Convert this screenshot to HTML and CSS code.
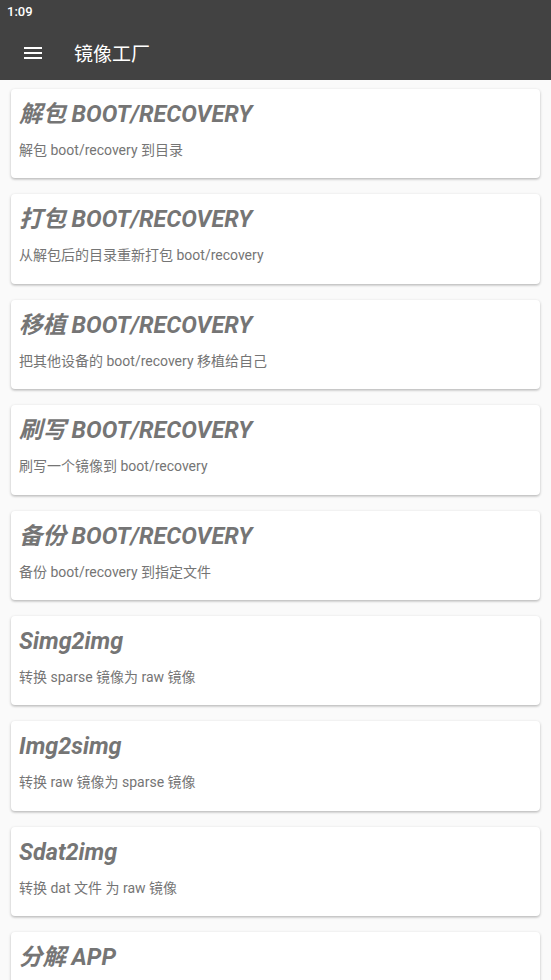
FILE: index.html
```html
<!DOCTYPE html>
<html lang="zh-CN">
<head>
    <meta charset="UTF-8">
    <meta name="viewport" content="width=device-width, initial-scale=1.0">
    <title>镜像工厂</title>
    <link rel="stylesheet" href="styles.css">
</head>
<body>

<header class="appbar">
    <div class="status">1:09</div>
    <div class="toolbar">
        <svg class="menu-icon" width="18" height="12" viewBox="0 0 18 12">
            <rect x="0" y="0" width="18" height="2" fill="#fff"/>
            <rect x="0" y="5" width="18" height="2" fill="#fff"/>
            <rect x="0" y="10" width="18" height="2" fill="#fff"/>
        </svg>
        <h1>镜像工厂</h1>
    </div>
</header>

<main class="list">
    <div class="card">
        <h2>解包 BOOT/RECOVERY</h2>
        <p>解包 boot/recovery 到目录</p>
    </div>
    <div class="card">
        <h2>打包 BOOT/RECOVERY</h2>
        <p>从解包后的目录重新打包 boot/recovery</p>
    </div>
    <div class="card">
        <h2>移植 BOOT/RECOVERY</h2>
        <p>把其他设备的 boot/recovery 移植给自己</p>
    </div>
    <div class="card">
        <h2>刷写 BOOT/RECOVERY</h2>
        <p>刷写一个镜像到 boot/recovery</p>
    </div>
    <div class="card">
        <h2>备份 BOOT/RECOVERY</h2>
        <p>备份 boot/recovery 到指定文件</p>
    </div>
    <div class="card">
        <h2>Simg2img</h2>
        <p>转换 sparse 镜像为 raw 镜像</p>
    </div>
    <div class="card">
        <h2>Img2simg</h2>
        <p>转换 raw 镜像为 sparse 镜像</p>
    </div>
    <div class="card">
        <h2>Sdat2img</h2>
        <p>转换 dat 文件 为 raw 镜像</p>
    </div>
    <div class="card">
        <h2>分解 APP</h2>
    </div>
</main>

</body>
</html>
```

FILE: styles.css
```css
body {
    margin: 0;
    padding: 0;
    background-color: #fafafa;
    font-family: Roboto, "Noto Sans CJK SC", sans-serif;
    height: 980px;
    overflow: hidden;
}
.appbar {
    background-color: #424242;
    color: #fff;
}
.status {
    height: 24px;
    line-height: 24px;
    padding-left: 7px;
    font-size: 13px;
    font-weight: 500;
}
.toolbar {
    height: 56px;
    display: flex;
    align-items: center;
}
.menu-icon {
    margin-left: 24px;
    margin-top: 1px;
}
.toolbar h1 {
    margin: 0 0 0 32px;
    font-size: 19px;
    font-weight: 400;
}
.list {
    padding: 9px 11px 0 11px;
}
.card {
    background-color: #fff;
    border-radius: 4px;
    box-shadow: 0 1px 3px rgba(0, 0, 0, 0.24), 0 2px 2px rgba(0, 0, 0, 0.06);
    padding: 8px 8px 18.4px 8px;
    margin-bottom: 16px;
}
.card h2 {
    margin: 0;
    font-size: 23.4px;
    line-height: 34px;
    font-weight: 700;
    font-style: italic;
    color: #757575;
}
.card p {
    margin: 9px 0 0 0;
    font-size: 14px;
    line-height: 20px;
    color: #757575;
}
```
